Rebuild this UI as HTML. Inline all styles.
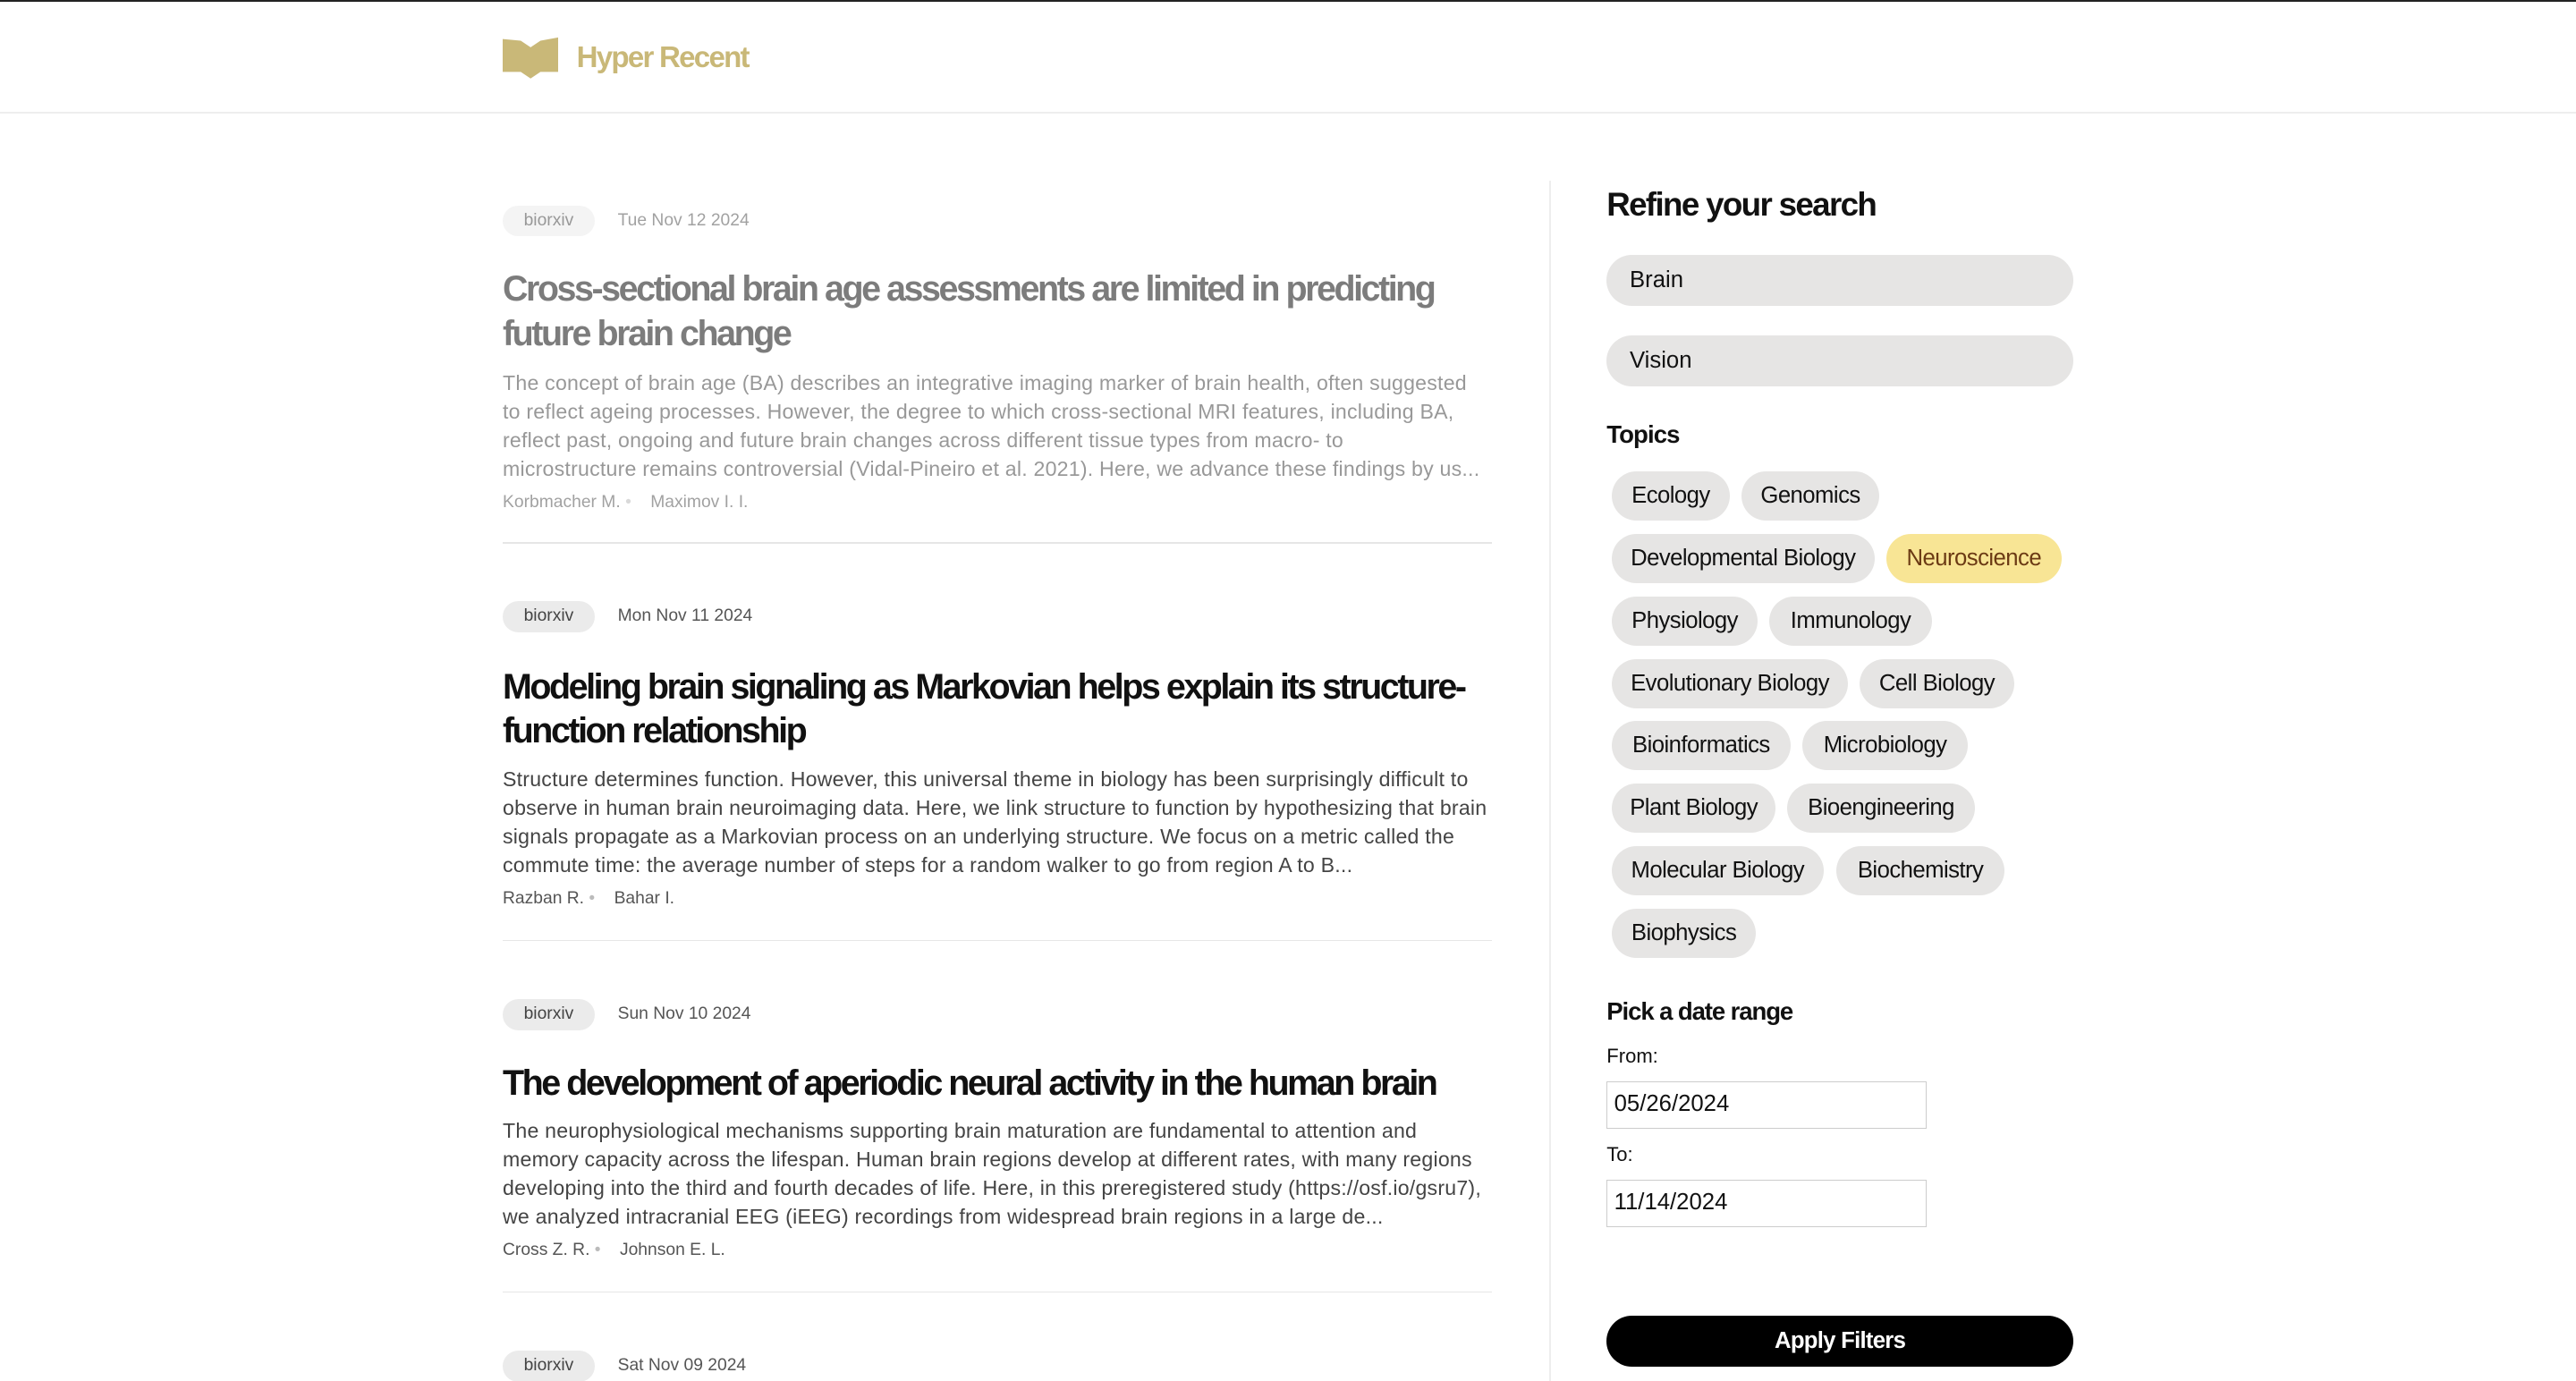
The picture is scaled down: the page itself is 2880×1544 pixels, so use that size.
<!DOCTYPE html>
<html><head><meta charset="utf-8"><style>
*{margin:0;padding:0;box-sizing:border-box}
html,body{width:2880px;height:1544px;overflow:hidden;background:#fff}
#z{zoom:1.8367;width:1568px;height:841px;position:relative;font-family:"Liberation Sans",sans-serif;color:#111}
.a{position:absolute;white-space:nowrap}
.badge{position:absolute;left:306px;width:56px;height:19px;border-radius:10px;background:#ebebeb;font-size:10.5px;color:#444;text-align:center;line-height:19px}
.date{position:absolute;left:376px;font-size:10.5px;color:#555;line-height:19px}
.title{position:absolute;left:306px;font-size:21.5px;font-weight:bold;letter-spacing:-1.35px;line-height:27px;color:#111;white-space:nowrap}
.abs{position:absolute;left:306px;font-size:12.6px;line-height:17.4px;color:#444;white-space:nowrap;letter-spacing:0.12px}
.auth{position:absolute;left:306px;font-size:10.5px;color:#555;white-space:nowrap}
.hr{position:absolute;left:306px;width:602px;height:1px;background:#e6e6e6}
.pill{position:absolute;height:30px;border-radius:15px;background:#e6e5e4;font-size:14px;line-height:30px;text-align:center;color:#111;letter-spacing:-0.3px;white-space:nowrap}
.inp{position:absolute;left:978px;width:284px;height:31px;border-radius:16px;background:#e6e5e4;font-size:14px;line-height:31px;padding-left:14px}
.date-in{position:absolute;left:978px;width:195px;height:29px;border:1px solid #ccc;font-size:14px;line-height:27px;padding-left:4px}
.faded{opacity:.55}
</style></head><body><div id="z">
<div class="a" style="left:0;top:0;width:1568px;height:1px;background:#222"></div>
<div class="a" style="left:0;top:68px;width:1568px;height:1px;background:#eee"></div>
<svg class="a" style="left:306px;top:22px" width="34" height="26" viewBox="0 0 34 26"><path d="M0 2 L11 3 L17 7 L23 3 L34 1 L34 22 L23 22 L17 26 L11 22 L0 22 Z" fill="#c9b878"/></svg>
<div class="a" style="left:351px;top:25px;font-size:18px;font-weight:bold;color:#c9b878;letter-spacing:-0.95px">Hyper Recent</div>

<div class="a" style="left:943px;top:110px;width:1px;height:731px;background:#eee"></div>

<div class="faded">
<div class="badge" style="top:125px">biorxiv</div>
<div class="date" style="top:125px">Tue Nov 12 2024</div>
<div class="title" style="top:163px">Cross-sectional brain age assessments are limited in predicting<br>future brain change</div>
<div class="abs" style="top:225px">The concept of brain age (BA) describes an integrative imaging marker of brain health, often suggested<br>to reflect ageing processes. However, the degree to which cross-sectional MRI features, including BA,<br>reflect past, ongoing and future brain changes across different tissue types from macro- to<br>microstructure remains controversial (Vidal-Pineiro et al. 2021). Here, we advance these findings by us...</div>
<div class="auth" style="top:300px">Korbmacher M. <span style="color:#bbb">•</span> &nbsp;&nbsp;&nbsp;Maximov I. I.</div>
</div>
<div class="hr" style="top:330px"></div>

<div class="badge" style="top:366px">biorxiv</div>
<div class="date" style="top:366px">Mon Nov 11 2024</div>
<div class="title" style="top:405px">Modeling brain signaling as Markovian helps explain its structure-<br>function relationship</div>
<div class="abs" style="top:466px">Structure determines function. However, this universal theme in biology has been surprisingly difficult to<br>observe in human brain neuroimaging data. Here, we link structure to function by hypothesizing that brain<br>signals propagate as a Markovian process on an underlying structure. We focus on a metric called the<br>commute time: the average number of steps for a random walker to go from region A to B...</div>
<div class="auth" style="top:541px">Razban R. <span style="color:#bbb">•</span> &nbsp;&nbsp;&nbsp;Bahar I.</div>
<div class="hr" style="top:572px"></div>

<div class="badge" style="top:608px">biorxiv</div>
<div class="date" style="top:608px">Sun Nov 10 2024</div>
<div class="title" style="top:646px">The development of aperiodic neural activity in the human brain</div>
<div class="abs" style="top:680px">The neurophysiological mechanisms supporting brain maturation are fundamental to attention and<br>memory capacity across the lifespan. Human brain regions develop at different rates, with many regions<br>developing into the third and fourth decades of life. Here, in this preregistered study (https://osf.io/gsru7),<br>we analyzed intracranial EEG (iEEG) recordings from widespread brain regions in a large de...</div>
<div class="auth" style="top:755px">Cross Z. R. <span style="color:#bbb">•</span> &nbsp;&nbsp;&nbsp;Johnson E. L.</div>
<div class="hr" style="top:786px"></div>

<div class="badge" style="top:822px">biorxiv</div>
<div class="date" style="top:822px">Sat Nov 09 2024</div>

<div class="a" style="left:978px;top:113px;font-size:20px;font-weight:bold;letter-spacing:-0.9px">Refine your search</div>
<div class="inp" style="top:155px">Brain</div>
<div class="inp" style="top:204px">Vision</div>
<div class="a" style="left:978px;top:256px;font-size:15px;font-weight:bold;letter-spacing:-0.5px">Topics</div>

<div class="pill" style="left:981px;top:287px;width:72px">Ecology</div>
<div class="pill" style="left:1060px;top:287px;width:84px">Genomics</div>
<div class="pill" style="left:981px;top:325px;width:160px">Developmental Biology</div>
<div class="pill" style="left:1148px;top:325px;width:107px;background:#f8e595;color:#6b3a14">Neuroscience</div>
<div class="pill" style="left:981px;top:363px;width:89px">Physiology</div>
<div class="pill" style="left:1077px;top:363px;width:99px">Immunology</div>
<div class="pill" style="left:981px;top:401px;width:144px">Evolutionary Biology</div>
<div class="pill" style="left:1132px;top:401px;width:94px">Cell Biology</div>
<div class="pill" style="left:981px;top:439px;width:109px">Bioinformatics</div>
<div class="pill" style="left:1097px;top:439px;width:101px">Microbiology</div>
<div class="pill" style="left:981px;top:477px;width:100px">Plant Biology</div>
<div class="pill" style="left:1088px;top:477px;width:114px">Bioengineering</div>
<div class="pill" style="left:981px;top:515px;width:129px">Molecular Biology</div>
<div class="pill" style="left:1118px;top:515px;width:102px">Biochemistry</div>
<div class="pill" style="left:981px;top:553px;width:88px">Biophysics</div>

<div class="a" style="left:978px;top:607px;font-size:15px;font-weight:bold;letter-spacing:-0.6px">Pick a date range</div>
<div class="a" style="left:978px;top:636px;font-size:12px">From:</div>
<div class="date-in" style="top:658px">05/26/2024</div>
<div class="a" style="left:978px;top:696px;font-size:12px">To:</div>
<div class="date-in" style="top:718px">11/14/2024</div>
<div class="a" style="left:978px;top:801px;width:284px;height:31px;border-radius:16px;background:#000;color:#fff;font-size:14px;font-weight:bold;text-align:center;line-height:31px;letter-spacing:-0.4px">Apply Filters</div>
</div></body></html>
